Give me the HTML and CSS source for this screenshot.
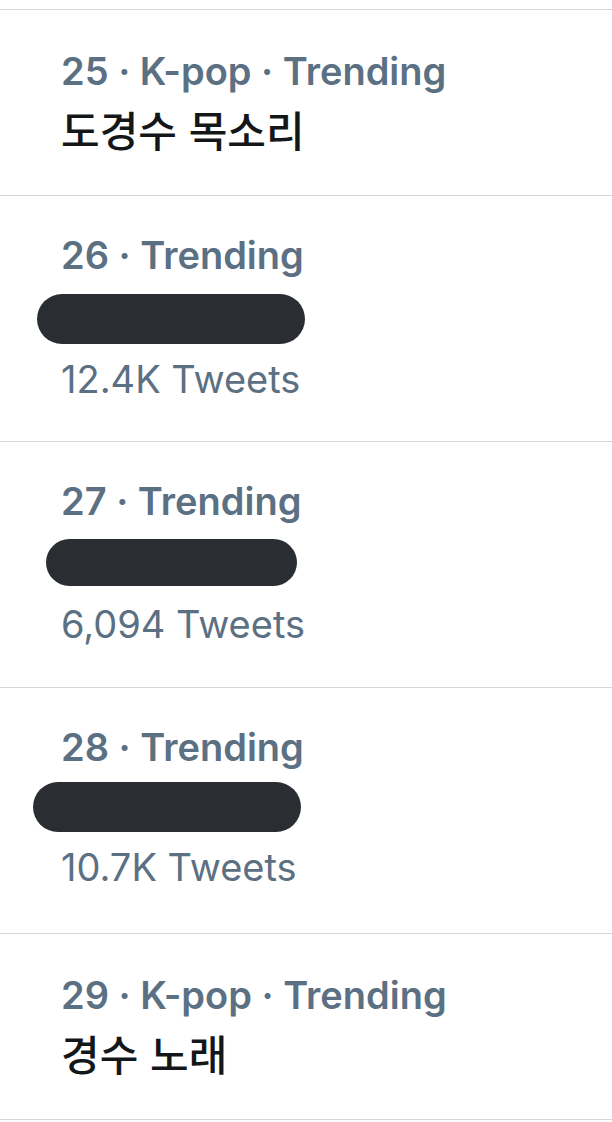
FILE: index.html
```html
<!DOCTYPE html>
<html lang="ko">
  <head>
    <meta charset="UTF-8" />
    <title>Trends</title>
    <link rel="stylesheet" href="styles.css">
  </head>
  <body>
    <div class="trends">
      <div class="trend">
        <div class="meta">25 · K-pop · Trending</div>
        <div class="title">도경수 목소리</div>
      </div>

      <div class="trend">
        <div class="meta">26 · Trending</div>
        <div class="redact redact-a"></div>
        <div class="count">12.4K Tweets</div>
      </div>

      <div class="trend">
        <div class="meta">27 · Trending</div>
        <div class="redact redact-b"></div>
        <div class="count">6,094 Tweets</div>
      </div>

      <div class="trend">
        <div class="meta">28 · Trending</div>
        <div class="redact redact-c"></div>
        <div class="count">10.7K Tweets</div>
      </div>

      <div class="trend">
        <div class="meta">29 · K-pop · Trending</div>
        <div class="title">경수 노래</div>
      </div>
    </div>
  </body>
</html>
```

FILE: styles.css
```css
  :root {
    --grey: #5b7083;
    --ink: #14171a;
    --line: #d3d6d9;
    --redact: #2a2e33;
  }

  body {
    margin: 0;
    background: #fff;
    font-family: Inter, "Noto Sans CJK KR", sans-serif;
  }

  .trends {
    margin-top: 9px;
    border-top: 1px solid var(--line);
  }

  .trend {
    border-bottom: 1px solid var(--line);
    padding: 39px 0 0 61px;
    height: 146px;
  }

  .trend:has(.redact) {
    height: 208px;
    padding-top: 37px;
  }

  .meta {
    color: var(--grey);
    font-weight: 600;
    font-size: 38px;
    line-height: 44px;
  }

  .title {
    color: var(--ink);
    font-family: "Noto Sans CJK KR", sans-serif;
    font-weight: 500;
    font-size: 42px;
    line-height: 54px;
    margin-top: 9px;
  }

  .redact {
    background: var(--redact);
    height: 50px;
    border-radius: 25px;
    margin-top: 17px;
  }

  /* hand drawn boxes, not all the same */
  .redact-a {
    width: 268px;
    margin-left: -24px;
  }
  .redact-b {
    width: 251px;
    height: 47px;
    margin-left: -15px;
    margin-top: 16px;
  }
  .redact-c {
    width: 268px;
    margin-left: -28px;
    margin-top: 13px;
  }

  .count {
    color: var(--grey);
    font-size: 38px;
    line-height: 44px;
    margin-top: 13px;
  }

  .redact-b + .count {
    margin-top: 16px;
  }
```
